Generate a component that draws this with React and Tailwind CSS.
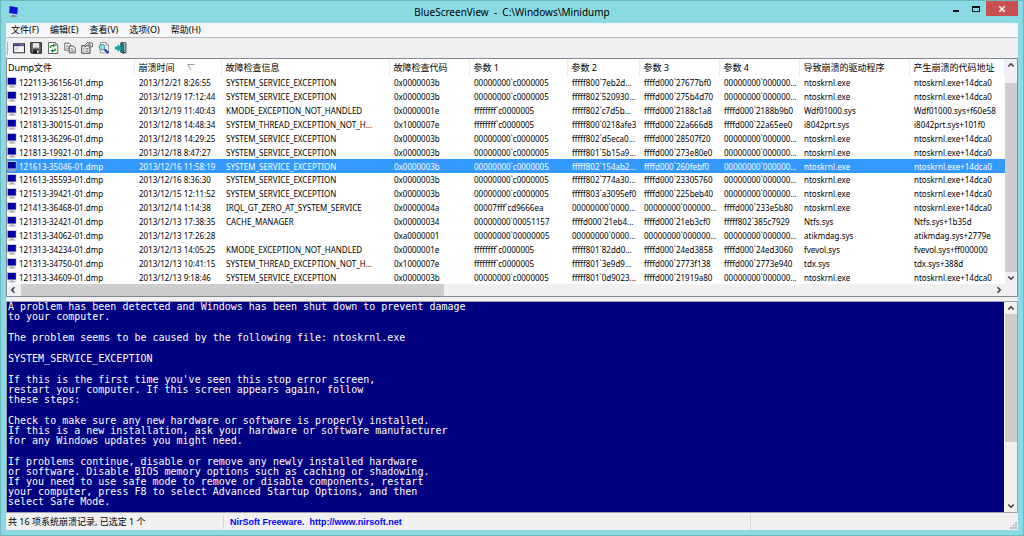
import React from "react";

const rows = [
  ["122113-36156-01.dmp", "2013/12/21 8:26:55", "SYSTEM_SERVICE_EXCEPTION", "0x0000003b", "00000000`c0000005", "fffff800`7eb2d...", "ffffd000`27677bf0", "00000000`000000...", "ntoskrnl.exe", "ntoskrnl.exe+14dca0"],
  ["121913-32281-01.dmp", "2013/12/19 17:12:44", "SYSTEM_SERVICE_EXCEPTION", "0x0000003b", "00000000`c0000005", "fffff802`520930...", "ffffd000`275b4d70", "00000000`000000...", "ntoskrnl.exe", "ntoskrnl.exe+14dca0"],
  ["121913-35125-01.dmp", "2013/12/19 11:40:43", "KMODE_EXCEPTION_NOT_HANDLED", "0x0000001e", "ffffffff`c0000005", "fffff802`c7d5b...", "ffffd000`2188c1a8", "ffffd000`2188b9b0", "Wdf01000.sys", "Wdf01000.sys+f60e58"],
  ["121813-30015-01.dmp", "2013/12/18 14:48:34", "SYSTEM_THREAD_EXCEPTION_NOT_H...", "0x1000007e", "ffffffff`c0000005", "fffff800`0218afe3", "ffffd000`22a666d8", "ffffd000`22a65ee0", "i8042prt.sys", "i8042prt.sys+101f0"],
  ["121813-36296-01.dmp", "2013/12/18 14:29:25", "SYSTEM_SERVICE_EXCEPTION", "0x0000003b", "00000000`c0000005", "fffff802`d5eca0...", "ffffd000`28507f20", "00000000`000000...", "ntoskrnl.exe", "ntoskrnl.exe+14dca0"],
  ["121813-19921-01.dmp", "2013/12/18 8:47:27", "SYSTEM_SERVICE_EXCEPTION", "0x0000003b", "00000000`c0000005", "fffff801`5b15a9...", "ffffd000`273e80e0", "00000000`000000...", "ntoskrnl.exe", "ntoskrnl.exe+14dca0"],
  ["121613-35046-01.dmp", "2013/12/16 11:58:19", "SYSTEM_SERVICE_EXCEPTION", "0x0000003b", "00000000`c0000005", "fffff802`154ab2...", "ffffd000`260febf0", "00000000`000000...", "ntoskrnl.exe", "ntoskrnl.exe+14dca0"],
  ["121613-35593-01.dmp", "2013/12/16 8:36:30", "SYSTEM_SERVICE_EXCEPTION", "0x0000003b", "00000000`c0000005", "fffff802`774a30...", "ffffd000`23305760", "00000000`000000...", "ntoskrnl.exe", "ntoskrnl.exe+14dca0"],
  ["121513-39421-01.dmp", "2013/12/15 12:11:52", "SYSTEM_SERVICE_EXCEPTION", "0x0000003b", "00000000`c0000005", "fffff803`a3095ef0", "ffffd000`225beb40", "00000000`000000...", "ntoskrnl.exe", "ntoskrnl.exe+14dca0"],
  ["121413-36468-01.dmp", "2013/12/14 1:14:38", "IRQL_GT_ZERO_AT_SYSTEM_SERVICE", "0x0000004a", "00007fff`cd9666ea", "00000000`0000...", "00000000`000000...", "ffffd000`233e5b80", "ntoskrnl.exe", "ntoskrnl.exe+14dca0"],
  ["121313-32421-01.dmp", "2013/12/13 17:38:35", "CACHE_MANAGER", "0x00000034", "00000000`00051157", "ffffd000`21eb4...", "ffffd000`21eb3cf0", "fffff802`385c7929", "Ntfs.sys", "Ntfs.sys+1b35d"],
  ["121313-34062-01.dmp", "2013/12/13 17:26:28", "", "0xa0000001", "00000000`00000005", "00000000`0000...", "00000000`000000...", "00000000`000000...", "atikmdag.sys", "atikmdag.sys+2779e"],
  ["121313-34234-01.dmp", "2013/12/13 14:05:25", "KMODE_EXCEPTION_NOT_HANDLED", "0x0000001e", "ffffffff`c0000005", "fffff801`82dd0...", "ffffd000`24ed3858", "ffffd000`24ed3060", "fvevol.sys", "fvevol.sys+ff000000"],
  ["121313-34750-01.dmp", "2013/12/13 10:41:15", "SYSTEM_THREAD_EXCEPTION_NOT_H...", "0x1000007e", "ffffffff`c0000005", "fffff801`3e9d9...", "ffffd000`2773f138", "ffffd000`2773e940", "tdx.sys", "tdx.sys+388d"],
  ["121313-34609-01.dmp", "2013/12/13 9:18:46", "SYSTEM_SERVICE_EXCEPTION", "0x0000003b", "00000000`c0000005", "fffff801`0d9023...", "ffffd000`21919a80", "00000000`000000...", "ntoskrnl.exe", "ntoskrnl.exe+14dca0"],
];

const selectedFile = "121613-35046-01.dmp";

const columns = [
  { title: "Dump文件", width: "w-[127px]" },
  { title: "崩溃时间", width: "w-[87px]", sorted: true },
  { title: "故障检查信息", width: "w-[168px]" },
  { title: "故障检查代码", width: "w-[80px]" },
  { title: "参数 1", width: "w-[98px]" },
  { title: "参数 2", width: "w-[72px]" },
  { title: "参数 3", width: "w-[80px]" },
  { title: "参数 4", width: "w-[80px]" },
  { title: "导致崩溃的驱动程序", width: "w-[110px]" },
  { title: "产生崩溃的代码地址", width: "" },
];

const paragraphs = [
  ["A problem has been detected and Windows has been shut down to prevent damage", "to your computer."],
  ["The problem seems to be caused by the following file: ntoskrnl.exe"],
  ["SYSTEM_SERVICE_EXCEPTION"],
  ["If this is the first time you've seen this stop error screen,", "restart your computer. If this screen appears again, follow", "these steps:"],
  ["Check to make sure any new hardware or software is properly installed.", "If this is a new installation, ask your hardware or software manufacturer", "for any Windows updates you might need."],
  ["If problems continue, disable or remove any newly installed hardware", "or software. Disable BIOS memory options such as caching or shadowing.", "If you need to use safe mode to remove or disable components, restart", "your computer, press F8 to select Advanced Startup Options, and then", "select Safe Mode."],
];

function Icon({ children }) {
  return (
    <svg viewBox="0 0 16 16" className="size-3" fill="none" aria-hidden="true">
      {children}
    </svg>
  );
}

const tools = [
  {
    label: "高级选项",
    icon: (
      <Icon>
        <path d="M.7 2.200h14.600v12.100H.7z" fill="#f4f4f4" stroke="#333" strokeWidth="1.400" />
        <path d="M1.400 2.900h13.200v2.600H1.400z" fill="#3a3a8c" />
        <path d="M9.500 4h1M11.500 4h1M13.200 4h.8" stroke="#fff" />
        <path d="M3 8h4.500M3 10h3" stroke="#aaa" />
      </Icon>
    ),
  },
  {
    label: "保存",
    icon: (
      <Icon>
        <path d="M1 1h14v14H2.500L1 13.500z" fill="#7a7a7a" stroke="#1a1a1a" strokeWidth="1.500" />
        <path d="M4 1.500h8v6H4z" fill="#e6e6e6" />
        <path d="M4 10h8.500v5H4z" fill="#222" />
        <path d="M9.500 11h2v3.500h-2z" fill="#eee" />
      </Icon>
    ),
  },
  {
    label: "刷新",
    icon: (
      <Icon>
        <path d="M2 .7h9l3.300 3.300v11.300H2z" fill="#fff" stroke="#555" strokeWidth="1.200" />
        <path d="M11 .7V4h3.300" stroke="#555" />
        <path d="M4.500 8c0-2.500 1.500-3.500 4-3.500M11.500 8.500c0 2.300-1.500 3.300-4 3.300" stroke="#0a8a2a" strokeWidth="1.800" />
        <path d="M8 2l3.500 2.500L8 7zM8 9.200L4.500 11.800 8 14.300z" fill="#0a8a2a" />
      </Icon>
    ),
  },
  {
    label: "复制",
    icon: (
      <Icon>
        <path d="M1 1.500h5.500L9 4v7H1z" fill="#fff" stroke="#555" strokeWidth="1.200" />
        <path d="M2.800 4.500h3M2.800 6.500h4M2.800 8.500h4" stroke="#777" />
        <path d="M7 5.500h5.500L15 8v6.500H7z" fill="#fff" stroke="#444" strokeWidth="1.200" />
        <path d="M8.800 8.500h3M8.800 10.500h4.500M8.800 12.500h4.500" stroke="#666" />
      </Icon>
    ),
  },
  {
    label: "属性",
    icon: (
      <Icon>
        <path d="M1 5h11v10H1z" fill="#fff" stroke="#333" strokeWidth="1.300" />
        <path d="M3 8.500h1.500M6 8.500h4M3 10.500h1.500M6 10.500h4M3 12.500h1.500M6 12.500h4" stroke="#555" />
        <path d="M5 4.500L8 1h5l2.500 1v4L12 7 9.500 5H7L5 7z" fill="#e8e8e8" stroke="#333" />
        <path d="M9 3h3.500M10 5h3" stroke="#444" />
      </Icon>
    ),
  },
  {
    label: "查找",
    icon: (
      <Icon>
        <path d="M3 .7h7.500L14 4v10.500H3z" fill="#fff" stroke="#777" />
        <path d="M10.500 .7V4H14" stroke="#777" />
        <circle cx="5.500" cy="7" r="3.800" fill="#7fe6ee" stroke="#4a7f92" strokeWidth="1.200" />
        <path d="M8.800 10l5 4.800" stroke="#1428c8" strokeWidth="2.800" />
      </Icon>
    ),
  },
  {
    label: "退出",
    icon: (
      <Icon>
        <path d="M8 1h6.500v13H8z" fill="#e4f4f4" stroke="#223" strokeWidth="1.200" />
        <path d="M8 1l4 2v12.500l-4-2z" fill="#158a90" stroke="#0a4a50" />
        <path d="M0 6.500h4V3.500L8.500 8 4 12.500v-3H0z" fill="#12b0b4" stroke="#08777c" strokeWidth=".8" />
      </Icon>
    ),
  },
];

function ComputerIcon() {
  return (
    <svg viewBox="0 0 10 11" className="h-[11px] w-[10px] shrink-0" aria-hidden="true">
      <path d="M0 0h9.500v8.500H0z" fill="#c9c9c9" />
      <path d="M.8 1h8v6.500h-8z" fill="#0000a8" />
      <path d="M3.500 8.500h3v1h-3zM1.500 9.500h7v1h-7z" fill="#a8a8a8" />
    </svg>
  );
}

function Arrow({ d, label }) {
  return (
    <button type="button" aria-label={label} className="flex size-3 shrink-0 items-center justify-center">
      <svg viewBox="0 0 8 8" className="size-2" fill="none" stroke="#404040" strokeWidth="1.600" aria-hidden="true">
        <path d={d} />
      </svg>
    </button>
  );
}

const UP = "M1.300 5.500L4 2.800l2.700 2.700";
const DOWN = "M1.300 2.500L4 5.200l2.700-2.700";
const LEFT = "M5.500 1.300L2.800 4l2.700 2.700";
const RIGHT = "M2.500 1.300L5.200 4 2.500 6.700";

function TitleBar() {
  return (
    <header className="grid h-[22px] grid-cols-[1fr_auto_1fr] items-start">
      <svg viewBox="0 0 12 12" className="mt-1 ml-px size-[13px]" aria-hidden="true">
        <path d="M2 .5l8.500 1.500-.5 7.500-8.500-1.500z" fill="#c0c0d0" />
        <path d="M2.400 1l7.600 1.400-.5 6.200-7.500-1.300z" fill="#0c14d8" />
        <path d="M5 9l3 .5 1.500 1.500L5 11.500l-2-1z" fill="#8c8c98" />
      </svg>
      <h1 className="pt-[3px] text-[10px] leading-4 whitespace-pre">BlueScreenView  -  C:\Windows\Minidump</h1>
      <div className="flex justify-end">
        <button type="button" aria-label="最小化" className="flex h-[15px] w-5 items-center justify-center">
          <span className="mt-1 h-[2px] w-[6px] bg-[#111]" />
        </button>
        <button type="button" aria-label="最大化" className="flex h-[15px] w-5 items-center justify-center">
          <span className="h-[6px] w-2 border border-t-2 border-[#111]" />
        </button>
        <button type="button" aria-label="关闭" className="flex h-[15px] w-8 items-center justify-center bg-[#c75050]">
          <svg viewBox="0 0 8 8" className="mt-px size-2" aria-hidden="true">
            <path d="M1.300 1.300l5.400 5.400M6.700 1.300L1.300 6.700" stroke="#fff" strokeWidth="1.500" />
          </svg>
        </button>
      </div>
    </header>
  );
}

function DumpList() {
  return (
    <section className="flex border border-[#828790] bg-white">
      <div className="min-w-0 flex-1">
        <table className="h-[225px] w-full table-fixed border-collapse">
          <thead>
            <tr className="h-[17px]">
              {columns.map((c, i) => (
                <th key={c.title} scope="col" className={`${c.width} border-r border-[#e3eefa] p-0 text-left font-normal whitespace-nowrap`}>
                  <span className={`flex items-center ${i === 0 ? "pl-px" : "pl-1"}`}>
                    {c.title}
                    {c.sorted && (
                      <svg viewBox="0 0 8 7" className="ml-3 h-[7px] w-2" fill="none" stroke="#999" aria-label="降序">
                        <path d="M7.500 .5H.7L4 6" />
                      </svg>
                    )}
                  </span>
                </th>
              ))}
            </tr>
          </thead>
          <tbody className="text-[8px]">
            {rows.map((r) => {
              const selected = r[0] === selectedFile;
              return (
                <tr key={r[0]} aria-selected={selected} className={selected ? "bg-[#3399ff] text-white" : ""}>
                  {r.map((v, i) => (
                    <td key={i} className="p-0 leading-[11px] whitespace-nowrap">
                      {i === 0 ? (
                        <span className="flex items-center gap-[2px]">
                          <ComputerIcon />
                          {v}
                        </span>
                      ) : (
                        <span className="block pl-[5px]">{v}</span>
                      )}
                    </td>
                  ))}
                </tr>
              );
            })}
          </tbody>
        </table>
        <div className="flex h-3 bg-[#f0f0f0]">
          <Arrow d={LEFT} label="向左滚动" />
          <div className="flex flex-1 pl-[2px]">
            <div className="w-[43.5%] bg-[#cdcdcd]" />
          </div>
          <Arrow d={RIGHT} label="向右滚动" />
        </div>
      </div>
      <div className="flex w-3 flex-col bg-[#f0f0f0]">
        <Arrow d={UP} label="向上滚动" />
        <div className="flex-1 pt-3">
          <div className="h-full bg-[#cdcdcd]" />
        </div>
        <Arrow d={DOWN} label="向下滚动" />
        <div className="h-3" />
      </div>
    </section>
  );
}

function CrashScreen() {
  return (
    <section className="mt-1 flex min-h-0 flex-1 border border-[#a0a0b0]">
      <div className="flex min-w-0 flex-1 flex-col gap-[11px] overflow-hidden bg-[#000080] pl-px font-['DejaVu_Sans_Mono',monospace] text-[10px] leading-[10px] whitespace-pre text-white">
        {paragraphs.map((p) => (
          <p key={p[0]}>{p.join("\n")}</p>
        ))}
      </div>
      <div className="flex w-[13px] flex-col border-l border-white bg-[#f0f0f0]">
        <Arrow d={UP} label="向上滚动" />
        <div className="flex-1">
          <div className="h-[69%] bg-[#cdcdcd]" />
        </div>
        <Arrow d={DOWN} label="向下滚动" />
      </div>
    </section>
  );
}

export default function App() {
  return (
    <div className="flex h-screen min-h-[536px] flex-col border border-[#6fb8c2] bg-[#8adae3] px-[5px] pb-[5px] font-['Noto_Sans','Noto_Sans_CJK_SC',sans-serif] text-[9px] leading-[14px] text-black">
      <TitleBar />
      <main className="flex min-h-0 flex-1 flex-col bg-[#f0f0f0]">
        <nav className="flex h-[15px] gap-[11px] border-b border-[#b8b8b8] bg-[#f5f6f7] pl-[5px]">
          {["文件(F)", "编辑(E)", "查看(V)", "选项(O)", "帮助(H)"].map((m) => (
            <button key={m} type="button" className="leading-[14px]">{m}</button>
          ))}
        </nav>
        <div className="flex h-5 items-center gap-[5px] pl-px">
          <span className="h-[13px] w-px bg-[#b0b0b0]" />
          {tools.map((t) => (
            <button key={t.label} type="button" aria-label={t.label}>{t.icon}</button>
          ))}
        </div>
        <DumpList />
        <CrashScreen />
        <footer className="flex h-[17px] items-center">
          <span className="w-[218px] border-r border-[#d7d7d7] pl-[2px]">共 16 项系统崩溃记录, 已选定 1 个</span>
          <a href="http://www.nirsoft.net" className="flex-1 pl-[6px] font-['Liberation_Sans',sans-serif] font-bold whitespace-pre text-[#0000ff]">NirSoft Freeware.  http://www.nirsoft.net</a>
          <span className="flex w-[268px] justify-end self-stretch border-l border-[#d7d7d7]">
            <svg viewBox="0 0 7 7" className="mr-px mb-px size-[7px] self-end" fill="#bcbcbc" aria-hidden="true">
              <path d="M5 0h2v2H5zM5 2.500h2v2H5zM2.500 2.500h2v2h-2zM5 5h2v2H5zM2.500 5h2v2h-2zM0 5h2v2H0z" />
            </svg>
          </span>
        </footer>
      </main>
    </div>
  );
}
